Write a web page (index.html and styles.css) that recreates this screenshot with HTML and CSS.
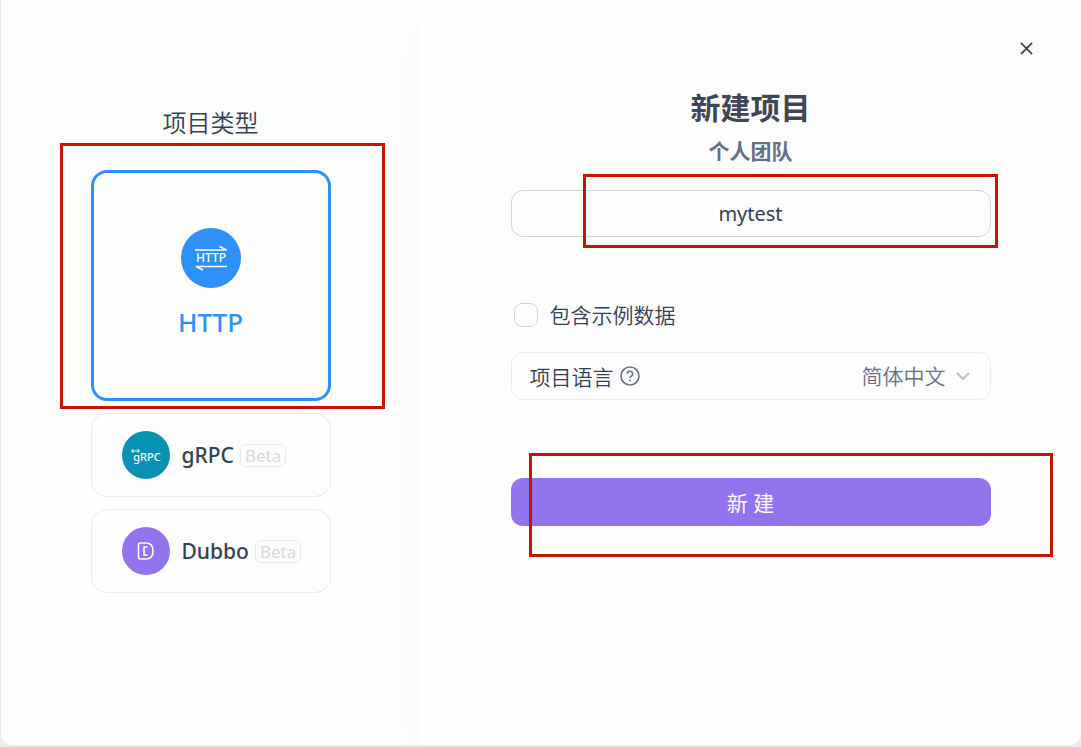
FILE: index.html
```html
<!DOCTYPE html>
<html lang="zh-CN">
<head>
  <meta charset="UTF-8">
  <meta name="viewport" content="width=device-width, initial-scale=1.0">
  <title>新建项目</title>
  <link rel="stylesheet" href="styles.css">
</head>

<body>
<div class="modal">
    <!-- Project type -->
    <div class="leftside">
      <h2>项目类型</h2>
      <div class="types">
        <div class="marked">
          <button type="button" class="type active">
            <svg class="logo" viewBox="0 0 60 60">
              <circle cx="30" cy="30" r="30" fill="#2e90fa"/>
              <path d="M14 22h31.500l-7-3.500M46 38.500H15l7 3.500" fill="none" stroke="#fff" stroke-width="1.500"/>
              <text x="30" y="34" class="logo-text" font-size="12" font-weight="500">HTTP</text>
            </svg>
            <span>HTTP</span>
          </button>
          <div class="mark mark-type"></div>
        </div>
        <button type="button" class="type">
          <svg class="logo" viewBox="0 0 48 48">
            <circle cx="24" cy="24" r="24" fill="#0891b2"/>
            <path d="M10 20h7M11.500 18l-2 2 2 2M15.500 18l2 2-2 2" fill="none" stroke="#fff" stroke-width="1"/>
            <text x="25" y="30" class="logo-text" font-size="11" font-weight="500">gRPC</text>
          </svg>
          <span>gRPC</span>
          <span class="beta">Beta</span>
        </button>
        <button type="button" class="type">
          <svg class="logo" viewBox="0 0 48 48">
            <circle cx="24" cy="24" r="24" fill="#9373ee"/>
            <path d="M18.500 16H24q7 0 7 8t-7 8h-5.500q-2 0-2-2V18q0-2 2-2z" fill="none" stroke="#fff" stroke-width="1.600"/>
            <path d="M25.500 20H22v8h3.500" fill="none" stroke="#fff" stroke-width="1.600"/>
          </svg>
          <span>Dubbo</span>
          <span class="beta">Beta</span>
        </button>
      </div>
    </div>

    <!-- New project form -->
    <div class="rightside">
      <button type="button" class="close" aria-label="关闭">
        <svg viewBox="0 0 14 14"><path d="M1 1l12 12M13 1L1 13" fill="none" stroke="#344054" stroke-width="1.800"/></svg>
      </button>
      <form class="form">
        <h1>新建项目</h1>
        <p class="team">个人团队</p>
        <div class="marked">
          <input type="text" class="inputbox" name="name" aria-label="项目名称" value="mytest">
          <div class="mark mark-name"></div>
        </div>
        <div class="example">
          <input type="checkbox" id="example">
          <label for="example">包含示例数据</label>
        </div>
        <div class="language">
          <label for="language">项目语言</label>
          <svg class="help" viewBox="0 0 20 20" fill="none" stroke="#667085" stroke-width="1.600">
            <circle cx="10" cy="10" r="9"/>
            <path d="M7.300 7.800a2.700 2.700 0 1 1 4.200 2.200q-1.500.8-1.500 2"/>
            <path d="M10 13.500v1.800"/>
          </svg>
          <div class="select">
            <select id="language" name="language">
              <option>简体中文</option>
              <option>English</option>
            </select>
            <svg class="arrow" viewBox="0 0 14 9"><path d="M1 1l6 6 6-6" fill="none" stroke="#bfbfbf" stroke-width="2"/></svg>
          </div>
        </div>
        <div class="marked">
          <button type="button" class="button">新 建</button>
          <div class="mark mark-submit"></div>
        </div>
      </form>
    </div>
</div>
</body>
</html>
```
FILE: styles.css
```css
* {
  box-sizing: border-box;
}

body {
  margin: 0;
  padding: 0 0 2px 1px;
  height: 100vh;
  background: #ebebec;
  font-family: "Noto Sans", "Noto Sans CJK SC", sans-serif;
  font-size: 21px;
  color: #344054;
}

button, input, select {
  font-family: inherit;
  font-size: inherit;
  color: inherit;
}

h1, h2, p {
  margin: 0;
}

.modal {
  display: flex;
  min-height: 100%;
  background: #fefefe;
  border-radius: 0 0 12px 12px;
  overflow: hidden;
}

.leftside {
  flex: 0 0 419px;
  display: flex;
  flex-direction: column;
  align-items: center;
  gap: 29px;
  padding-top: 105px;
}

h2 {
  font-size: 24px;
  font-weight: 350;
  line-height: 36px;
}

.types {
  display: flex;
  flex-direction: column;
  gap: 12px;
  width: 240px;
}

.type {
  display: flex;
  align-items: center;
  width: 100%;
  height: 84px;
  padding: 0 30px;
  background: #fefefe;
  border: 1px solid #eaecf0;
  border-radius: 16px;
  font-weight: 500;
  cursor: pointer;
}

.type .logo {
  flex: none;
  width: 48px;
  height: 48px;
  margin-right: 12px;
}

.type.active {
  flex-direction: column;
  justify-content: center;
  gap: 16px;
  height: 231px;
  padding-bottom: 3px;
  border: 3px solid #2e90fa;
  color: #2e90fa;
  font-size: 26px;
  line-height: 36px;
}

.type.active .logo {
  width: 60px;
  height: 60px;
  margin: 0;
}

.logo-text {
  fill: #fff;
  text-anchor: middle;
}

.beta {
  margin-left: 6px;
  padding: 0 4px;
  border: 1px solid #eaeaea;
  border-radius: 6px;
  color: #d9d9d9;
  font-size: 17px;
  font-weight: 400;
  line-height: 21px;
}

.rightside {
  position: relative;
  flex: 1;
  padding-top: 88px;
  background: #fefefe;
  box-shadow: 0 20px 60px rgba(0, 0, 0, 0.04);
}

.close {
  position: absolute;
  top: 36px;
  right: 42px;
  display: flex;
  padding: 6px;
  background: none;
  border: none;
  cursor: pointer;
}

.close svg {
  width: 13px;
  height: 13px;
}

.form {
  max-width: 480px;
  margin: 0 auto;
}

h1 {
  font-size: 30px;
  line-height: 40px;
  text-align: center;
  color: #3f4654;
}

.team {
  margin: 8px 0 24px;
  font-weight: 700;
  line-height: 30px;
  text-align: center;
  color: #667085;
}

.inputbox {
  display: block;
  width: 100%;
  height: 47px;
  background: #fefefe;
  border: 1px solid #d0d5dd;
  border-radius: 12px;
  font-size: 20px;
  text-align: center;
  outline: none;
}

.example {
  display: flex;
  align-items: center;
  gap: 12px;
  margin: 62px 0 21px;
  padding-left: 3px;
  line-height: 32px;
  font-weight: 350;
}

.example input {
  appearance: none;
  width: 24px;
  height: 24px;
  margin: 0;
  border: 1px solid #d0d5dd;
  border-radius: 8px;
}

.language {
  display: flex;
  align-items: center;
  height: 48px;
  margin-bottom: 78px;
  padding: 0 20px 0 18px;
  border: 1px solid #eaecf0;
  border-radius: 12px;
  font-weight: 350;
}

.help {
  width: 20px;
  height: 20px;
  margin-left: 6px;
}

.select {
  position: relative;
  margin-left: auto;
}

.select select {
  display: block;
  appearance: none;
  padding: 0 24px 0 0;
  background: none;
  border: none;
  color: #667085;
  font-weight: 350;
  outline: none;
}

.arrow {
  position: absolute;
  top: 50%;
  right: 0;
  width: 14px;
  height: 9px;
  margin-top: -4px;
  pointer-events: none;
}

.button {
  display: block;
  width: 100%;
  height: 48px;
  background: #9373ee;
  border: none;
  border-radius: 12px;
  color: #fff;
  cursor: pointer;
}

/* Red tutorial marks over the controls */
.marked {
  position: relative;
}

.mark {
  position: absolute;
  border: 3px solid #c01800;
  pointer-events: none;
}

.mark-type {
  inset: -27px -54px -8px -31px;
}

.mark-name {
  inset: -16px -7px -11px 72px;
}

.mark-submit {
  inset: -25px -62px -31px 18px;
}
```
